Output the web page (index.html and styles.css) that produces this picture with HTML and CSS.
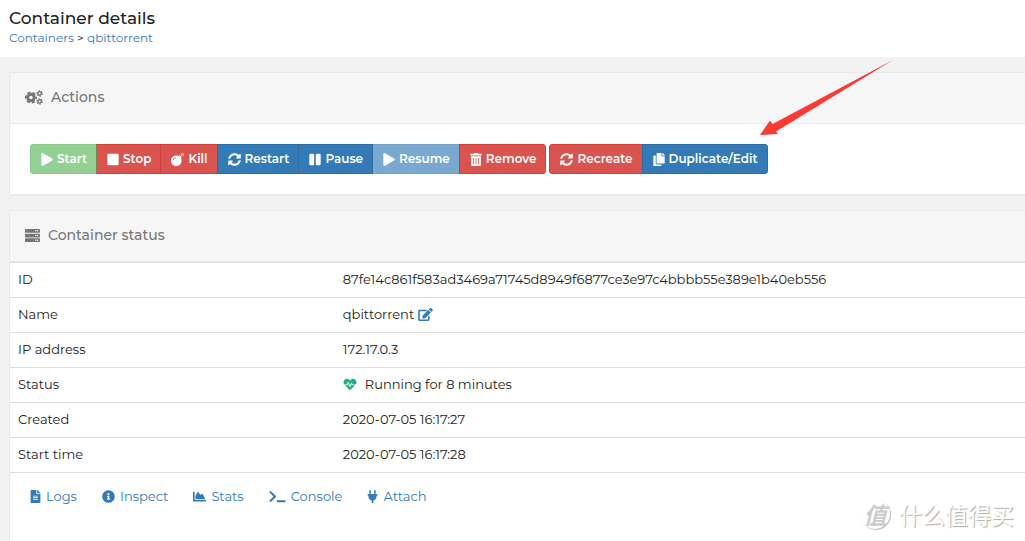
FILE: index.html
```html
<!DOCTYPE html>
<html lang="en">
<head>
<meta charset="utf-8">
<title>Container details</title>
<link rel="stylesheet" href="styles.css">
</head>
<body>
<svg class="sprite" aria-hidden="true">
  <symbol id="play" viewBox="0 0 448 512"><path d="M424.4 214.7L72.4 6.6C43.8-10.3 0 6.1 0 47.9V464c0 37.5 40.7 60.1 72.4 41.3l352-208c31.4-18.5 31.5-64.1 0-82.6z"/></symbol>
  <symbol id="stop" viewBox="0 0 448 512"><rect y="32" width="448" height="448" rx="48"/></symbol>
  <symbol id="bomb" viewBox="0 0 512 512"><path d="M440.5 88.500l-52 52L415 167c9.400 9.400 9.400 24.600 0 33.900l-17.400 17.400c11.800 26.100 18.400 55.100 18.400 85.600 0 114.900-93.100 208-208 208S0 418.900 0 304 93.100 96 208 96c30.500 0 59.500 6.600 85.600 18.400L311 97c9.400-9.400 24.600-9.400 33.900 0l26.500 26.500 52-52zM500 60h-24c-16 0-16 24 0 24h24c16 0 16-24 0-24zM440 0c-7 0-12 5-12 12v24c0 16 24 16 24 0V12c0-7-5-12-12-12zm34 55l17-17c11-11-6-28-17-17l-17 17c-11 11 6 28 17 17zm-68 0c11 11 28-6 17-17l-17-17c-11-11-28 6-17 17zm68 34c-11-11-28 6-17 17l17 17c11 11 28-6 17-17zM112 272c0-35.300 28.700-64 64-64 21 0 21-32 0-32-52.900 0-96 43.100-96 96 0 21 32 21 32 0z"/></symbol>
  <symbol id="sync" viewBox="0 0 512 512"><path d="M370.720 133.280C339.458 104.008 298.888 87.962 255.848 88c-77.458.068-144.328 53.178-162.791 126.850-1.344 5.363-6.122 9.150-11.651 9.150H24.103c-7.498 0-13.194-6.807-11.807-14.176C33.933 94.924 134.813 8 256 8c66.448 0 126.791 26.136 171.315 68.685L463.030 40.970C478.149 25.851 504 36.559 504 57.941V192c0 13.255-10.745 24-24 24H345.941c-21.382 0-32.090-25.851-16.971-40.971zM32 296h134.059c21.382 0 32.090 25.851 16.971 40.971l-41.750 41.750c31.262 29.273 71.835 45.319 114.876 45.280 77.418-.070 144.315-53.144 162.787-126.849 1.344-5.363 6.122-9.150 11.651-9.150h57.304c7.498 0 13.194 6.807 11.807 14.176C478.067 417.076 377.187 504 256 504c-66.448 0-126.791-26.136-171.315-68.685L48.970 471.030C33.851 486.149 8 475.441 8 454.059V320c0-13.255 10.745-24 24-24z"/></symbol>
  <symbol id="pause" viewBox="0 0 448 512"><rect y="32" width="192" height="448" rx="48"/><rect x="256" y="32" width="192" height="448" rx="48"/></symbol>
  <symbol id="trash" viewBox="0 0 448 512"><path fill-rule="evenodd" d="M32 464a48 48 0 0 0 48 48h288a48 48 0 0 0 48-48V128H32zm272-256a16 16 0 0 1 32 0v224a16 16 0 0 1-32 0zm-96 0a16 16 0 0 1 32 0v224a16 16 0 0 1-32 0zm-96 0a16 16 0 0 1 32 0v224a16 16 0 0 1-32 0zM432 32H312l-9-19a24 24 0 0 0-22-13H167a24 24 0 0 0-22 13l-9 19H16A16 16 0 0 0 0 48v32a16 16 0 0 0 16 16h416a16 16 0 0 0 16-16V48a16 16 0 0 0-16-16z"/></symbol>
  <symbol id="copy" viewBox="0 0 448 512"><path d="M320 448v40c0 13-11 24-24 24H24c-13 0-24-11-24-24V120c0-13 11-24 24-24h72v296c0 31 25 56 56 56zm0-344V0H152c-13 0-24 11-24 24v368c0 13 11 24 24 24h272c13 0 24-11 24-24V128H344c-13 0-24-11-24-24zm121-31L375 7c-5-5-11-7-17-7h-6v96h96v-6c0-6-2-12-7-17z"/></symbol>
  <symbol id="cogs" viewBox="0 0 640 512"><g fill="none" stroke="currentColor"><circle cx="212" cy="256" r="118" stroke-width="108"/><circle cx="212" cy="256" r="186" stroke-width="60" stroke-dasharray="110 84.800" stroke-dashoffset="55"/><circle cx="520" cy="116" r="60" stroke-width="50"/><circle cx="520" cy="116" r="94" stroke-width="42" stroke-dasharray="54 44.400"/><circle cx="520" cy="396" r="60" stroke-width="50"/><circle cx="520" cy="396" r="94" stroke-width="42" stroke-dasharray="54 44.400"/></g></symbol>
  <symbol id="server" viewBox="0 0 512 512"><path fill-rule="evenodd" d="M24 32h464q24 0 24 24v80q0 24-24 24H24q-24 0-24-24V56q0-24 24-24zm408 40a24 24 0 1 0 0 48 24 24 0 0 0 0-48zm-64 0a24 24 0 1 0 0 48 24 24 0 0 0 0-48zM24 192h464q24 0 24 24v80q0 24-24 24H24q-24 0-24-24v-80q0-24 24-24zm408 40a24 24 0 1 0 0 48 24 24 0 0 0 0-48zm-64 0a24 24 0 1 0 0 48 24 24 0 0 0 0-48zM24 352h464q24 0 24 24v80q0 24-24 24H24q-24 0-24-24v-80q0-24 24-24zm408 40a24 24 0 1 0 0 48 24 24 0 0 0 0-48zm-64 0a24 24 0 1 0 0 48 24 24 0 0 0 0-48z"/></symbol>
  <symbol id="edit" viewBox="0 0 576 512"><path d="M402.600 83.200l90.200 90.200c3.800 3.800 3.800 10 0 13.800L274.400 405.600l-92.800 10.300c-12.400 1.400-22.900-9.100-21.500-21.500l10.300-92.800L388.800 83.200c3.800-3.800 10-3.800 13.800 0zm162-22.900l-48.800-48.800c-15.200-15.200-39.900-15.200-55.200 0l-35.400 35.400c-3.800 3.800-3.800 10 0 13.800l90.200 90.200c3.800 3.800 10 3.800 13.800 0l35.400-35.400c15.200-15.300 15.200-40 0-55.200zM384 346.200V448H64V128h229.800c3.200 0 6.200-1.300 8.500-3.500l40-40c7.600-7.600 2.200-20.500-8.500-20.500H48C21.500 64 0 85.500 0 112v352c0 26.500 21.500 48 48 48h352c26.500 0 48-21.500 48-48V306.200c0-10.700-12.900-16-20.500-8.500l-40 40c-2.200 2.300-3.500 5.300-3.500 8.500z"/></symbol>
  <symbol id="heart" viewBox="0 0 512 512"><path d="M320.200 243.800l-49.700 99.400c-6 12.100-23.400 11.700-28.900-.6l-56.900-126.300-30 71.700H60.600l182.500 186.500c7.100 7.300 18.600 7.300 25.700 0L451.400 288H342.300zM473.700 74l-2.400-2.500c-51.500-52.600-135.800-52.600-187.400 0L256 100l-27.900-28.500c-51.500-52.700-135.900-52.700-187.400 0L38.300 74C-10.400 123.700-12.700 201.500 31 256h102.400l35.900-86.200c5.400-12.900 23.600-13.200 29.400-.4l58.200 129.300 49-97.900c5.900-11.800 22.700-11.800 28.600 0l27.600 55.200H481c43.700-54.500 41.400-132.300-7.300-182z"/></symbol>
  <symbol id="file" viewBox="0 0 384 512"><path fill-rule="evenodd" d="M224 136V0H24Q0 0 0 24v464q0 24 24 24h336q24 0 24-24V160H248q-24 0-24-24zm64 236q0 12-12 12H108q-12 0-12-12v-8q0-12 12-12h168q12 0 12 12zm0-64q0 12-12 12H108q-12 0-12-12v-8q0-12 12-12h168q12 0 12 12zm0-72q0-12-12-12H108q-12 0-12 12v8q0 12 12 12h168q12 0 12-12zM384 122v6H256V0h6q10 0 17 7l98 98q7 7 7 17z"/></symbol>
  <symbol id="info" viewBox="0 0 512 512"><path fill-rule="evenodd" d="M256 8a248 248 0 1 0 0 496 248 248 0 0 0 0-496zm0 110a42 42 0 1 1 0 84 42 42 0 0 1 0-84zm56 254q0 12-12 12h-88q-12 0-12-12v-24q0-12 12-12h12v-64h-12q-12 0-12-12v-24q0-12 12-12h64q12 0 12 12v100h12q12 0 12 12z"/></symbol>
  <symbol id="chart" viewBox="0 0 512 512"><path d="M500 384q12 0 12 12v40q0 12-12 12H12q-12 0-12-12V76q0-12 12-12h40q12 0 12 12v308zM373 152c-5-8-15-9-22-3l-63 43-80-112c-5-7-16-7-21 1L96 224v128h384z"/></symbol>
  <symbol id="terminal" viewBox="0 0 640 512"><path d="M258 273L64 467q-17 17-34 0L7 445q-17-17 0-34l154-155L7 101q-17-17 0-34l23-22q17-17 34 0l194 194q16 17 0 34zM640 421v34q0 25-24 25H312q-24 0-24-24v-32q0-24 24-24h304q24 0 24 21z"/></symbol>
  <symbol id="plug" viewBox="0 0 384 512"><path d="M256 144V32a32 32 0 0 1 64 0v112zm112 16H16q-16 0-16 16v32q0 16 16 16h16v32c0 77 55 142 128 157v99h64v-99c73-15 128-80 128-157v-32h16q16 0 16-16v-32q0-16-16-16zm-240-16V32a32 32 0 0 0-64 0v112z"/></symbol>
</svg>

<header class="page-header">
  <h1 class="page-title">Container details</h1>
  <nav class="breadcrumb"><a href="#">Containers</a> &gt; <a href="#">qbittorrent</a></nav>
</header>

<main class="content">
  <section class="widget">
    <h2 class="widget-header"><svg class="icon icon-cogs"><use href="#cogs"/></svg>Actions</h2>
    <div class="widget-body">
      <div class="btn-group">
        <button class="btn success" disabled><svg class="icon"><use href="#play"/></svg>Start</button>
        <button class="btn danger"><svg class="icon"><use href="#stop"/></svg>Stop</button>
        <button class="btn danger"><svg class="icon icon-mid"><use href="#bomb"/></svg>Kill</button>
        <button class="btn primary"><svg class="icon icon-mid"><use href="#sync"/></svg>Restart</button>
        <button class="btn primary"><svg class="icon"><use href="#pause"/></svg>Pause</button>
        <button class="btn primary" disabled><svg class="icon"><use href="#play"/></svg>Resume</button>
        <button class="btn danger"><svg class="icon"><use href="#trash"/></svg>Remove</button>
      </div>
      <div class="btn-group">
        <button class="btn danger"><svg class="icon icon-mid"><use href="#sync"/></svg>Recreate</button>
        <button class="btn primary"><svg class="icon"><use href="#copy"/></svg>Duplicate/Edit</button>
      </div>
    </div>
  </section>

  <section class="widget widget-status">
    <h2 class="widget-header"><svg class="icon icon-server"><use href="#server"/></svg>Container status</h2>
    <table class="details">
      <tbody>
        <tr><th scope="row">ID</th><td>87fe14c861f583ad3469a71745d8949f6877ce3e97c4bbbb55e389e1b40eb556</td></tr>
        <tr><th scope="row">Name</th><td>qbittorrent <a href="#" aria-label="Rename"><svg class="icon icon-wide"><use href="#edit"/></svg></a></td></tr>
        <tr><th scope="row">IP address</th><td>172.17.0.3</td></tr>
        <tr><th scope="row">Status</th><td><svg class="icon icon-heart"><use href="#heart"/></svg>Running for 8 minutes</td></tr>
        <tr><th scope="row">Created</th><td>2020-07-05 16:17:27</td></tr>
        <tr><th scope="row">Start time</th><td>2020-07-05 16:17:28</td></tr>
      </tbody>
    </table>
    <nav class="links">
      <a href="#"><svg class="icon icon-slim"><use href="#file"/></svg>Logs</a>
      <a href="#"><svg class="icon icon-mid"><use href="#info"/></svg>Inspect</a>
      <a href="#"><svg class="icon icon-mid"><use href="#chart"/></svg>Stats</a>
      <a href="#"><svg class="icon icon-term"><use href="#terminal"/></svg>Console</a>
      <a href="#"><svg class="icon icon-slim"><use href="#plug"/></svg>Attach</a>
    </nav>
  </section>
</main>

<svg class="arrow" viewBox="0 0 134 76" aria-hidden="true"><path d="M0 75L10 60.500 12.500 64 133 0 16 71.500 18 74z"/></svg>
<div class="watermark"><span class="watermark-logo">值</span><span>什么值得买</span></div>
</body>
</html>
```

FILE: styles.css
```css
* { box-sizing: border-box; }

body {
  margin: 0;
  min-height: 100vh;
  display: flex;
  flex-direction: column;
  overflow: hidden;
  background: #f2f2f2;
  color: #222;
  font: 13px/18px Montserrat, Inter, sans-serif;
}

a { color: #337ab7; text-decoration: none; }

.sprite { position: absolute; width: 0; height: 0; }

.icon {
  width: 12px;
  height: 13px;
  flex: none;
  fill: currentColor;
  vertical-align: -2px;
}
.icon-mid { width: 13px; }
.icon-slim { width: 11px; }
.icon-wide { width: 15px; }
.icon-term { width: 17px; }

.page-header {
  padding: 8px 9px 10px;
  background: #fff;
}
.page-title {
  margin: 0;
  font-size: 17px;
  line-height: 21px;
  font-weight: 500;
}
.breadcrumb { line-height: 18px; font-size: 12px; }

.content {
  flex: 1;
  display: flex;
  flex-direction: column;
  gap: 14px;
  padding: 15px 0 0 9px;
}

.widget {
  background: #fff;
  border: 1px solid #e9e9e9;
  border-right: 0;
  border-bottom-width: 2px;
}
.widget-status { flex: 1; border-bottom: 0; }

.widget-header {
  display: flex;
  align-items: center;
  margin: 0;
  padding: 14px 15px 16px;
  background: #f6f6f6;
  border-bottom: 1px solid #e9e9e9;
  color: #767676;
  font-size: 14px;
  line-height: 20px;
  font-weight: 500;
}
.icon-cogs { width: 18px; height: 15px; margin-right: 8px; }
.icon-server { width: 15px; height: 15px; margin-right: 8px; }

.widget-body {
  display: flex;
  gap: 3px;
  padding: 20px;
}
.btn-group { display: flex; }

.btn {
  display: flex;
  align-items: center;
  gap: 4px;
  height: 30px;
  padding: 0 9px 0 10px;
  border: 1px solid;
  border-radius: 0;
  color: #fff;
  font: 600 12px/18px Montserrat, Inter, sans-serif;
}
.btn + .btn { margin-left: -1px; }
.btn:first-child { border-radius: 3px 0 0 3px; }
.btn:last-child { border-radius: 0 3px 3px 0; }
.primary { background: #337ab7; border-color: #2e6da4; }
.danger { background: #d9534f; border-color: #d43f3a; }
.success { background: #5cb85c; border-color: #4cae4c; }
.btn:disabled { opacity: .65; }

.details {
  width: 100%;
  border-collapse: collapse;
}
.details th, .details td {
  padding: 7px 8px 9px;
  border-top: 1px solid #ddd;
  border-bottom: 1px solid #ddd;
  text-align: left;
  font-weight: 400;
}
.details th { width: 32%; }
.icon-heart { width: 14px; margin-right: 8px; }
.details .icon-heart { color: #23ae89; }

.links {
  display: flex;
  gap: 25px;
  padding: 14px 20px;
}
.links a {
  display: flex;
  align-items: center;
  gap: 5px;
}

.arrow {
  position: absolute;
  left: 760px;
  top: 60px;
  width: 134px;
  height: 76px;
  fill: #fb3a36;
}

.watermark {
  position: absolute;
  right: 11px;
  bottom: 12px;
  display: flex;
  align-items: center;
  gap: 9px;
  color: #fff;
  font: 23px/30px "Noto Sans CJK SC", sans-serif;
  text-shadow: 1px 1px 1px #aaa;
}
.watermark-logo {
  width: 30px;
  height: 30px;
  border-radius: 50%;
  box-shadow: 1px 1px 1px #bbb;
  color: #ccc;
  font-weight: 700;
  font-style: italic;
  text-align: center;
  text-shadow: none;
}
```
